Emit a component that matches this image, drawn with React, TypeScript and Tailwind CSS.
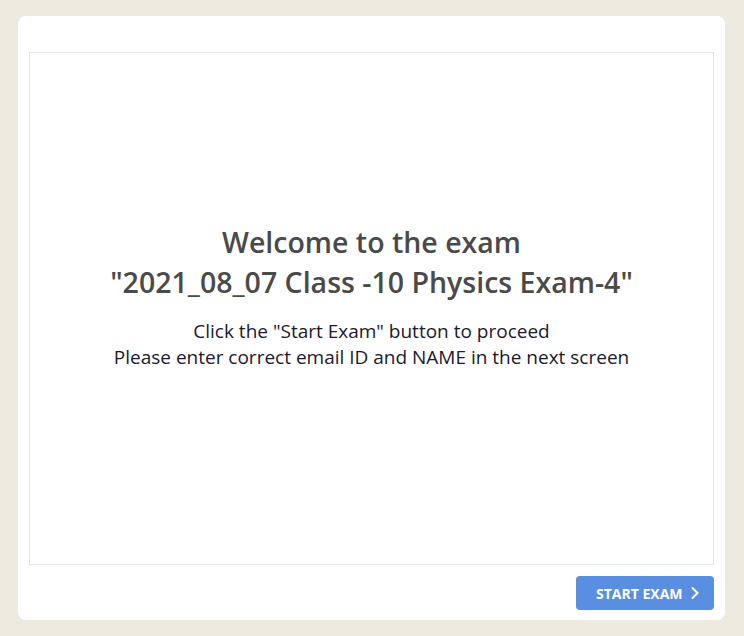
import { ChevronRight } from "lucide-react";

export default function App() {
  return (
    <div
      className="min-h-[636px] w-full bg-[#edeadf] px-[18px] pt-4 pb-4"
      style={{ fontFamily: '"Open Sans", sans-serif' }}
    >
      <div className="flex w-[707px] flex-col rounded-lg bg-white px-[11px] pt-9 pb-[10px]">
        <div className="flex h-[513px] flex-col items-center justify-center border border-[#e6e6e6] pb-[25px] text-center">
          <h1 className="text-[28.5px] leading-[40px] font-semibold text-[#4a4a4a]">
            Welcome to the exam
            <br />
            "2021_08_07 Class -10 Physics Exam-4"
          </h1>
          <div className="mt-4 text-[19px] leading-[26px] text-[#1a1a2e]">
            <p>Click the "Start Exam" button to proceed</p>
            <p>Please enter correct email ID and NAME in the next screen</p>
          </div>
        </div>
        <div className="mt-[11px] flex justify-end">
          <button className="flex h-[34px] w-[138px] items-center gap-0.5 rounded bg-[#5a8ee0] pl-5 text-[14px] font-bold text-white">
            START EXAM
            <ChevronRight className="h-5 w-5" strokeWidth={2.5} />
          </button>
        </div>
      </div>
    </div>
  );
}
